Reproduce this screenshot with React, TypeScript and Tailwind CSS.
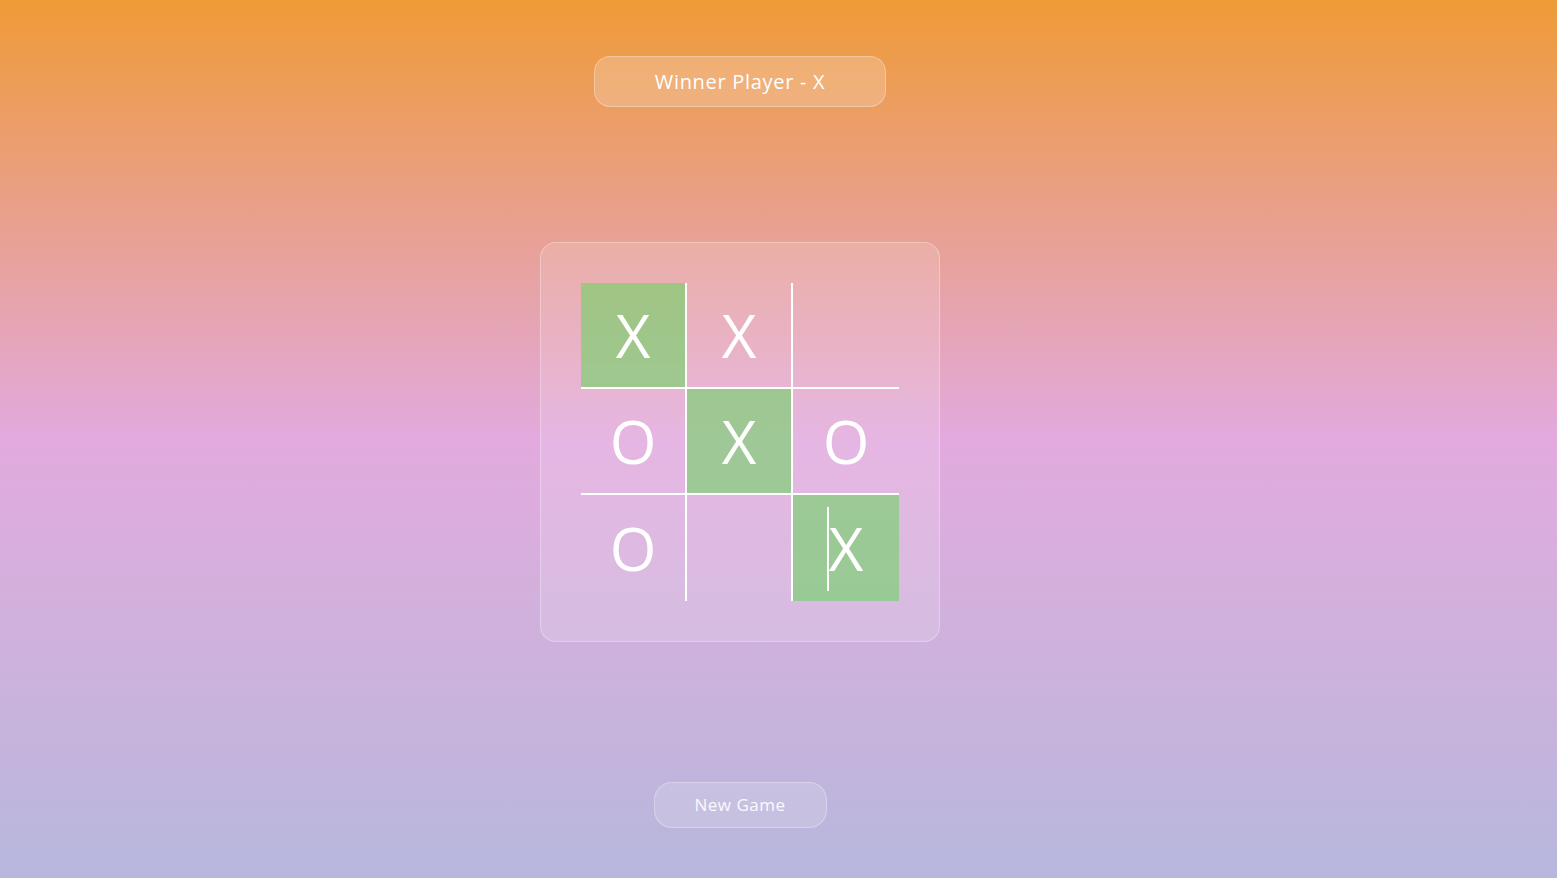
import React from "react";

type Cell = "X" | "O" | "";

const board: Cell[] = ["X", "X", "", "O", "X", "O", "O", "", "X"];
const winLine = [0, 4, 8];

const borderFor = (i: number) => {
  const col = i % 3;
  const row = Math.floor(i / 3);
  const r = col < 2 ? "border-r-2" : "";
  const b = row < 2 ? "border-b-2" : "";
  return `${r} ${b}`;
};

export default function App() {
  return (
    <div
      className="min-h-screen w-full pr-[77px] flex flex-col items-center bg-[linear-gradient(to_bottom,#ef9b37_0%,#e9a08e_25%,#e2aade_50%,#cdb2dc_75%,#b7b7dd_100%)]"
      style={{ fontFamily: "'Open Sans', Lato, sans-serif" }}
    >
      {/* status */}
      <div className="mt-[56px] w-[292px] h-[51px] flex items-center justify-center rounded-2xl bg-white/20 border border-white/30 text-white text-[20px] tracking-[0.7px] pt-[1px]">
        Winner Player - X
      </div>

      {/* board */}
      <div className="mt-[135px] w-[400px] h-[400px] rounded-2xl bg-white/15 border border-white/30 flex items-center justify-center">
        <div className="grid grid-cols-[106px_106px_106px] grid-rows-[106px_106px_106px]">
          {board.map((v, i) => (
            <div
              key={i}
              className={`relative flex items-center justify-center border-white text-white text-[60px] font-normal leading-none ${borderFor(i)} ${
                winLine.includes(i) ? "bg-[rgba(110,212,100,0.6)]" : ""
              }`}
            >
              {i === 8 && (
                <span className="absolute left-[34px] top-[12px] w-[2px] h-[84px] bg-white" />
              )}
              {v}
            </div>
          ))}
        </div>
      </div>

      <button className="mt-[140px] w-[173px] h-[46px] rounded-[18px] bg-white/15 border border-white/30 text-white/90 text-[17px] tracking-[0.5px]">
        New Game
      </button>
    </div>
  );
}
